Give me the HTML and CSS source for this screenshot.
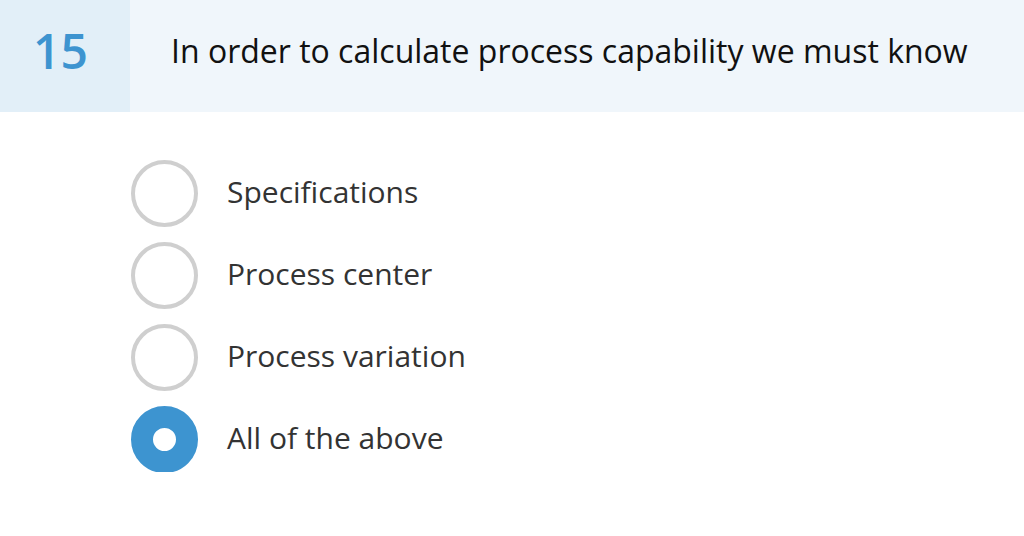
FILE: index.html
```html
<!DOCTYPE html>
<html>
<head>
<meta charset="utf-8">
<link rel="stylesheet" href="styles.css">
</head>
<body>
<div class="header">
  <div class="num">15</div>
  <div class="question">In order to calculate process capability we must know</div>
</div>
<ul class="options">
  <li class="option"><span class="radio"></span><span class="label">Specifications</span></li>
  <li class="option"><span class="radio"></span><span class="label">Process center</span></li>
  <li class="option"><span class="radio"></span><span class="label">Process variation</span></li>
  <li class="option selected"><span class="radio"></span><span class="label">All of the above</span></li>
</ul>
</body>
</html>
```
FILE: styles.css
```css
html, body {
  margin: 0;
  padding: 0;
  background: #ffffff;
  font-family: "Open Sans", "Noto Sans", sans-serif;
}
.header {
  display: flex;
  height: 112px;
  background: #f0f6fb;
}
.num {
  width: 130px;
  display: flex;
  align-items: center;
  justify-content: center;
  background: #e2eff8;
  color: #3d94d0;
  font-size: 48px;
  font-weight: 600;
  padding-bottom: 12px;
  padding-right: 9px;
  box-sizing: border-box;
}
.question {
  display: flex;
  align-items: center;
  padding-left: 41px;
  padding-bottom: 12px;
  font-size: 32px;
  color: #111111;
}
.options {
  list-style: none;
  margin: 48px 0 0 131px;
  padding: 0;
  display: flex;
  flex-direction: column;
  gap: 16px;
}
.option {
  display: flex;
  align-items: center;
  height: 66px;
}
.radio {
  width: 67px;
  height: 67px;
  box-sizing: border-box;
  border: 4px solid #cfcfcf;
  border-radius: 50%;
  flex: none;
}
.selected .radio {
  border: 22px solid #3d94d0;
  background: #ffffff;
}
.label {
  margin-left: 29px;
  font-size: 30px;
  color: #333333;
  padding-bottom: 4px;
}
```
